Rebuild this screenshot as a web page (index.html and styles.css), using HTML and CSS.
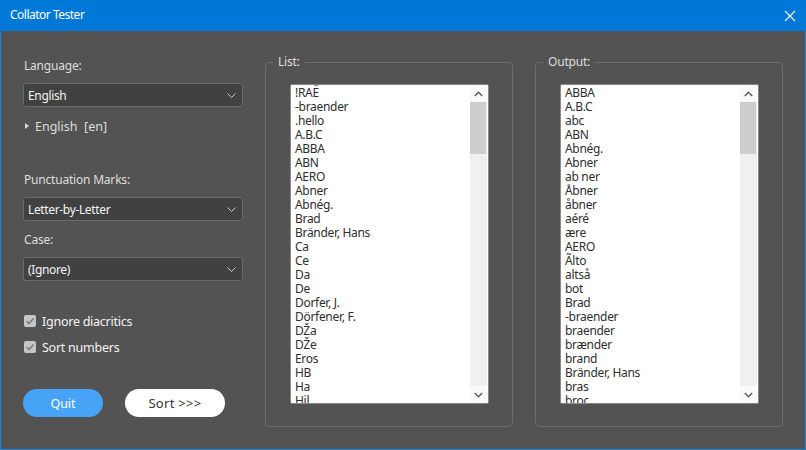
FILE: index.html
```html
<!DOCTYPE html>
<html>
<head>
<meta charset="utf-8">
<link rel="stylesheet" href="styles.css">
</head>
<body>
<div class="window">
  <div class="titlebar">
    <span class="title">Collator Tester</span>
    <svg class="close" width="12" height="12" viewBox="0 0 12 12"><path d="M1 1L11 11M11 1L1 11" stroke="#fff" stroke-width="1.2" fill="none"/></svg>
  </div>
  <div class="content">
    <div class="leftcol">
      <div class="label first">Language:</div>
      <div class="select"><span>English</span><svg class="chev" width="9" height="5" viewBox="0 0 9 5"><path d="M0.5 0.5L4.5 4.5L8.5 0.5" stroke="#cfcfcf" fill="none"/></svg></div>
      <div class="tree"><span class="tri"></span><span class="treetext">English  [en]</span></div>
      <div class="label punct">Punctuation Marks:</div>
      <div class="select"><span>Letter-by-Letter</span><svg class="chev" width="9" height="5" viewBox="0 0 9 5"><path d="M0.5 0.5L4.5 4.5L8.5 0.5" stroke="#cfcfcf" fill="none"/></svg></div>
      <div class="label case">Case:</div>
      <div class="select"><span>(Ignore)</span><svg class="chev" width="9" height="5" viewBox="0 0 9 5"><path d="M0.5 0.5L4.5 4.5L8.5 0.5" stroke="#cfcfcf" fill="none"/></svg></div>
      <div class="check c1"><span class="box"><svg width="12" height="12" viewBox="0 0 12 12"><path d="M2.5 6L5 8.5L9.5 3.5" stroke="#7a7a7a" stroke-width="1.6" fill="none"/></svg></span><span>Ignore diacritics</span></div>
      <div class="check c2"><span class="box"><svg width="12" height="12" viewBox="0 0 12 12"><path d="M2.5 6L5 8.5L9.5 3.5" stroke="#7a7a7a" stroke-width="1.6" fill="none"/></svg></span><span>Sort numbers</span></div>
      <div class="buttons">
        <div class="btn quit">Quit</div>
        <div class="btn sort">Sort &gt;&gt;&gt;</div>
      </div>
    </div>
    <div class="group">
      <span class="legend">List:</span>
      <div class="listbox">
        <div class="items">
          <div>!RAË</div><div>-braender</div><div>.hello</div><div>A.B.C</div><div>ABBA</div><div>ABN</div><div>AERO</div><div>Abner</div><div>Abnég.</div><div>Brad</div><div>Bränder, Hans</div><div>Ca</div><div>Ce</div><div>Da</div><div>De</div><div>Dorfer, J.</div><div>Dörfener, F.</div><div>DŽa</div><div>DŽe</div><div>Eros</div><div>HB</div><div>Ha</div><div>Hil</div>
        </div>
        <div class="scroll">
          <div class="sbtn"><svg width="9" height="6" viewBox="0 0 9 6"><path d="M0.8 5L4.5 1.3L8.2 5" stroke="#606060" stroke-width="1.6" fill="none"/></svg></div>
          <div class="track"><div class="thumb"></div></div>
          <div class="sbtn"><svg width="9" height="6" viewBox="0 0 9 6"><path d="M0.8 1L4.5 4.7L8.2 1" stroke="#606060" stroke-width="1.6" fill="none"/></svg></div>
        </div>
      </div>
    </div>
    <div class="group">
      <span class="legend">Output:</span>
      <div class="listbox">
        <div class="items">
          <div>ABBA</div><div>A.B.C</div><div>abc</div><div>ABN</div><div>Abnég.</div><div>Abner</div><div>ab ner</div><div>Åbner</div><div>åbner</div><div>aéré</div><div>ære</div><div>AERO</div><div>Ãlto</div><div>altså</div><div>bot</div><div>Brad</div><div>-braender</div><div>braender</div><div>brænder</div><div>brand</div><div>Bränder, Hans</div><div>bras</div><div>broc</div>
        </div>
        <div class="scroll">
          <div class="sbtn"><svg width="9" height="6" viewBox="0 0 9 6"><path d="M0.8 5L4.5 1.3L8.2 5" stroke="#606060" stroke-width="1.6" fill="none"/></svg></div>
          <div class="track"><div class="thumb"></div></div>
          <div class="sbtn"><svg width="9" height="6" viewBox="0 0 9 6"><path d="M0.8 1L4.5 4.7L8.2 1" stroke="#606060" stroke-width="1.6" fill="none"/></svg></div>
        </div>
      </div>
    </div>
  </div>
</div>
</body>
</html>
```
FILE: styles.css
```css
* { box-sizing: border-box; }
html, body { margin: 0; padding: 0; }
body {
  width: 806px;
  height: 450px;
  overflow: hidden;
  font-family: "Noto Sans", "Open Sans", sans-serif;
  font-size: 12px;
}
.window {
  width: 806px;
  height: 450px;
  background: #535353;
  border: 1px solid #1a82d8;
  border-top: none;
  display: flex;
  flex-direction: column;
}
.titlebar {
  height: 31px;
  margin: 0 -1px;
  background: #0078d7;
  display: flex;
  align-items: center;
  justify-content: space-between;
  padding: 0 10px 0 10px;
  color: #fff;
}
.title { font-size: 12px; letter-spacing: -0.5px; line-height: 16px; margin-top: -1px; }
.content {
  flex: 1;
  display: flex;
  padding: 0 22px 0 22px;
  gap: 22px;
}
.leftcol {
  width: 220px;
  display: flex;
  flex-direction: column;
  color: #dedede;
}
.label { line-height: 16px; height: 16px; padding-left: 1px; font-size: 12px; letter-spacing: -0.2px; }
.first { margin-top: 27px; }
.punct { margin-top: 38px; }
.case { margin-top: 11px; }
.select {
  margin-top: 9px;
  height: 24px;
  background: #414141;
  border: 1px solid #6a6a6a;
  border-radius: 3px;
  display: flex;
  align-items: center;
  justify-content: space-between;
  padding: 0 6px 0 4px;
  color: #f4f4f4;
  font-size: 12px;
  letter-spacing: -0.35px;
}
.chev { margin-top: 1px; }
.tree {
  margin-top: 11px;
  height: 16px;
  display: flex;
  align-items: center;
  padding-left: 2px;
}
.tri {
  width: 0; height: 0;
  border-left: 4px solid #d8d8d8;
  border-top: 3px solid transparent;
  border-bottom: 3px solid transparent;
  margin-right: 6px;
}
.treetext { white-space: pre; font-size: 12.5px; }
.check {
  height: 16px;
  display: flex;
  align-items: center;
  gap: 6px;
  padding-left: 1px;
  color: #f4f4f4;
  font-size: 12.5px;
  letter-spacing: -0.25px;
}
.c1 { margin-top: 32px; }
.c2 { margin-top: 10px; }
.box {
  width: 12px; height: 12px;
  background: #c6c6c6;
  border-radius: 2px;
  display: flex;
}
.buttons {
  margin-top: 34px;
  display: flex;
  gap: 22px;
}
.btn {
  height: 28px;
  border-radius: 14px;
  display: flex;
  align-items: center;
  justify-content: center;
  font-size: 12.5px;
}
.quit { width: 80px; background: #46a3f5; color: #fff; }
.sort { width: 100px; background: #fff; color: #333; font-size: 13px; letter-spacing: 0.3px; }
.group {
  position: relative;
  width: 248px;
  margin-top: 31px;
  height: 365px;
  border: 1px solid #6d6d6d;
  border-radius: 4px;
  padding: 21px 0 0 24px;
}
.legend {
  position: absolute;
  top: -9px;
  left: 7px;
  padding: 0 5px;
  background: #535353;
  color: #dedede;
  line-height: 16px;
  font-size: 12px;
  letter-spacing: -0.2px;
}
.listbox {
  width: 199px;
  height: 320px;
  background: #fff;
  border: 1px solid #8a8a8a;
  border-radius: 2px;
  display: flex;
  overflow: hidden;
}
.items {
  flex: 1;
  padding: 1px 0 0 4px;
  color: #2e2e2e;
  line-height: 14px;
  font-size: 12px;
  letter-spacing: -0.3px;
  overflow: hidden;
}
.scroll {
  width: 17px;
  margin-right: 1px;
  display: flex;
  flex-direction: column;
  background: #f0f0f0;
}
.sbtn {
  height: 17px;
  display: flex;
  align-items: center;
  justify-content: center;
  background: #fafafa;
}
.track { flex: 1; padding: 0 1px 0 0; }
.thumb { height: 52px; background: #cdcdcd; }
```
